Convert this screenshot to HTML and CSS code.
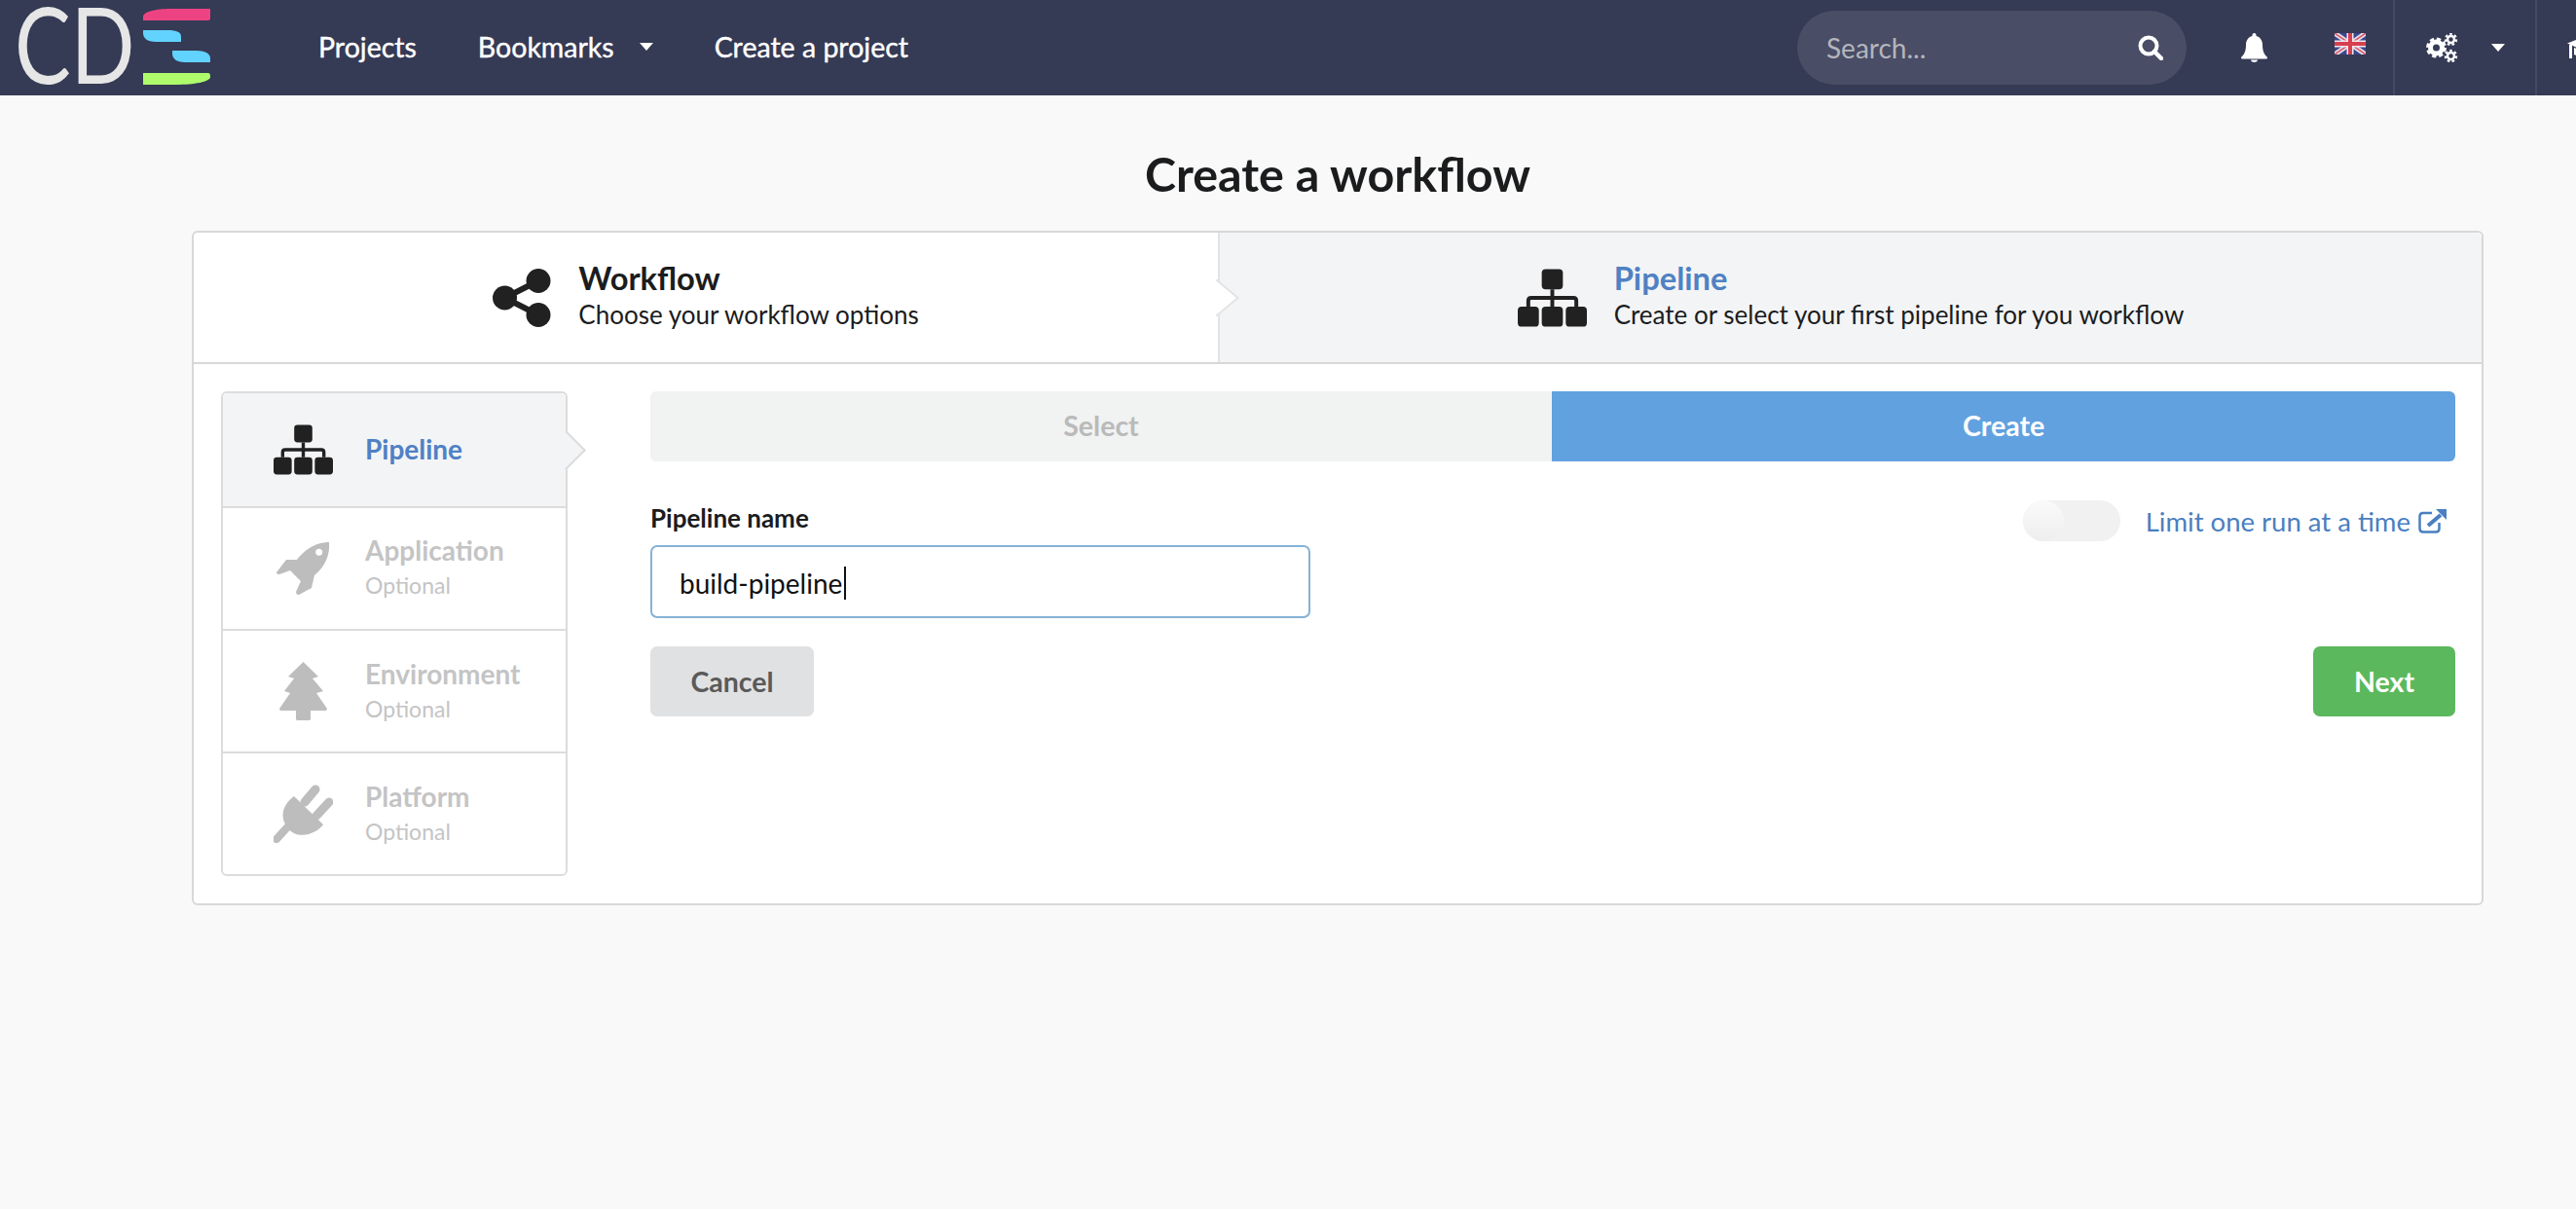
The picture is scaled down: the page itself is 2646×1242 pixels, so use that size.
FILE: index.html
```html
<!DOCTYPE html>
<html lang="en">

<head>
    <meta charset="UTF-8">
    <meta name="viewport" content="width=device-width, initial-scale=1.0">
    <title>Create a workflow</title>
    <link rel="stylesheet" href="styles.css">
</head>

<body>
    <nav class="navbar">
        <div class="nav-left">
            <svg class="logo" width="230" height="98" viewBox="0 0 230 98">
                <text class="logo-text" transform="translate(15 86) scale(.8 1)">CD</text>
                <path fill="#ee4382" d="M216 9H175C160 9 147 12 147 17V21H214Q216 21 216 19Z" />
                <path fill="#62d2fe" d="M147 31H172C182 31 186 33 186 38V43H160C151 43 147 39 147 34Z" />
                <path fill="#62d2fe" d="M177 52H202C212 52 216 56 216 60V64H190C181 64 177 60 177 55Z" />
                <path fill="#aefc6c" d="M147 75H214Q216 75 216 79C216 84 200 87 180 87H147Z" />
            </svg>
            <a class="nav-link" href="#">Projects</a>
            <a class="nav-link" href="#">Bookmarks<span class="caret caret-link"></span></a>
            <a class="nav-link" href="#">Create a project</a>
        </div>

        <div class="search">
            <span class="search-text">Search...</span>
            <svg width="26" height="26" viewBox="0 0 26 26">
                <circle cx="11" cy="11" r="8.5" fill="none" stroke="#fff" stroke-width="4" />
                <path d="M17 17l7 7" stroke="#fff" stroke-width="4.5" stroke-linecap="round" />
            </svg>
        </div>

        <svg class="bell" width="27" height="30" viewBox="0 0 27 30">
            <path fill="#fff" d="M13.5 0c-1.2 0-2 .8-2 2v1C7 4 5 8 5 12c0 7-2 10-5 13 0 1 .5 1.500 1.500 1.500h24c1 0 1.500-.5 1.500-1.500-3-3-5-6-5-13 0-4-2-8-6.500-9V2c0-1.200-.8-2-2-2z" />
            <path fill="#fff" d="M10 27.500h7c0 1.500-1.500 2.500-3.500 2.500S10 29 10 27.500z" />
        </svg>

        <svg class="flag" width="32" height="22" viewBox="0 0 32 22">
            <rect width="32" height="22" fill="#39478f" />
            <path d="M0 0l32 22M32 0L0 22" stroke="#e8e0e6" stroke-width="5" />
            <path d="M0 0l32 22M32 0L0 22" stroke="#d9576a" stroke-width="1.500" />
            <path d="M16 0v22M0 11h32" stroke="#f1e9ee" stroke-width="7" />
            <path d="M16 0v22M0 11h32" stroke="#d8404f" stroke-width="4" />
        </svg>

        <div class="nav-cell nav-cell-gears">
            <svg width="33" height="30" viewBox="0 0 33 30">
                <g fill="none" stroke="#fff">
                    <circle cx="10.500" cy="15" r="6" stroke-width="5" />
                    <circle cx="10.500" cy="15" r="8.500" stroke-width="4" stroke-dasharray="4 2.700" />
                    <circle cx="25.500" cy="6.500" r="3.500" stroke-width="2.500" />
                    <circle cx="25.500" cy="6.500" r="5.500" stroke-width="2.500" stroke-dasharray="2.500 2.300" />
                    <circle cx="25.500" cy="23.500" r="3.500" stroke-width="2.500" />
                    <circle cx="25.500" cy="23.500" r="5.500" stroke-width="2.500" stroke-dasharray="2.500 2.300" />
                </g>
            </svg>
            <span class="caret caret-gears"></span>
        </div>

        <div class="nav-cell nav-cell-last">
            <svg width="34" height="22" viewBox="0 0 34 22">
                <path fill="#fff" d="M0 6.500L17 0l17 7-17 7z" />
                <path fill="#fff" d="M2 8h3v14H2zM7 11l10 4 10-4v7c-6 3-14 3-20 0z" />
            </svg>
        </div>
    </nav>

    <div class="content">
        <h1 class="page-title">Create a workflow</h1>

        <div class="wizard">
            <div class="steps">
                <div class="step step-active">
                    <svg class="step-icon" width="60" height="60" viewBox="0 0 60 60">
                        <circle cx="47" cy="12.500" r="12.500" fill="#212121" />
                        <circle cx="47" cy="47.500" r="12.500" fill="#212121" />
                        <circle cx="12.500" cy="30" r="12.500" fill="#212121" />
                        <path d="M47 12.500L12.500 30 47 47.500" fill="none" stroke="#212121" stroke-width="6" />
                    </svg>
                    <div class="step-text">
                        <div class="step-title">Workflow</div>
                        <div class="step-desc">Choose your workflow options</div>
                    </div>
                </div>
                <div class="step step-current">
                    <svg class="step-icon" width="71" height="60" viewBox="0 0 72 60">
                        <use href="#sitemap" />
                    </svg>
                    <div class="step-text">
                        <div class="step-title step-title-blue">Pipeline</div>
                        <div class="step-desc">Create or select your first pipeline for you workflow</div>
                    </div>
                </div>
            </div>

            <div class="wizard-body">
                <div class="sidebar">
                    <div class="side-row side-row-active">
                        <div class="side-icon">
                            <svg width="61" height="54" viewBox="0 0 72 60">
                                <defs>
                                    <g id="sitemap" fill="#212121">
                                        <rect x="25" width="22" height="21" rx="4" />
                                        <rect y="39" width="22" height="21" rx="4" />
                                        <rect x="25" y="39" width="22" height="21" rx="4" />
                                        <rect x="50" y="39" width="22" height="21" rx="4" />
                                        <path d="M11 39v-6q0-3 3-3h44q3 0 3 3v6M36 21v18" fill="none" stroke="#212121" stroke-width="4" />
                                    </g>
                                </defs>
                                <use href="#sitemap" />
                            </svg>
                        </div>
                        <div class="side-text">
                            <div class="side-title side-title-blue">Pipeline</div>
                        </div>
                    </div>
                    <div class="side-row side-row-app">
                        <div class="side-icon">
                            <svg width="55" height="54" viewBox="0 0 55 54">
                                <path fill="#bdbdbd" fill-rule="evenodd" d="M54 0C45 0 33 3 21 18H10L0 31Q0 33 3 33L14 29 25 40 20 51Q20 54 23 54L36 47 39 34C51 24 55 12 54 0ZM43.700 6.800a3.500 3.500 0 1 1 0 7 3.500 3.500 0 0 1 0-7Z" />
                            </svg>
                        </div>
                        <div class="side-text">
                            <div class="side-title">Application</div>
                            <div class="side-sub">Optional</div>
                        </div>
                    </div>
                    <div class="side-row">
                        <div class="side-icon">
                            <svg width="49" height="60" viewBox="0 0 49 60">
                                <path fill="#bdbdbd" d="M24.500 0L40 15l-6 2 11 13-7 2 11 16-1 2H32v9l-1 1H18l-1-1v-9H1l-1-2 11-16-6-2 10-13-6-2z" />
                            </svg>
                        </div>
                        <div class="side-text">
                            <div class="side-title">Environment</div>
                            <div class="side-sub">Optional</div>
                        </div>
                    </div>
                    <div class="side-row side-row-last">
                        <div class="side-icon">
                            <svg width="61" height="60" viewBox="0 0 61 60">
                                <path fill="#bdbdbd" d="M21 12L51 41C45 50 25 58 15 45 5 33 10 20 21 12Z" />
                                <path d="M32 18L43 5M44 32L57 18" stroke="#bdbdbd" stroke-width="9" stroke-linecap="round" />
                                <path d="M14 44L3 56" stroke="#bdbdbd" stroke-width="8" stroke-linecap="round" />
                            </svg>
                        </div>
                        <div class="side-text">
                            <div class="side-title">Platform</div>
                            <div class="side-sub">Optional</div>
                        </div>
                    </div>
                </div>

                <div class="main">
                    <div class="tabs">
                        <div class="tab tab-select">Select</div>
                        <div class="tab tab-create">Create</div>
                    </div>

                    <div class="form-row">
                        <div>
                            <div class="field-label">Pipeline name</div>
                            <div class="field-input">build-pipeline<span class="field-caret"></span></div>
                        </div>
                        <div class="limit">
                            <div class="toggle"><div class="toggle-knob"></div></div>
                            <a class="limit-link" href="#">Limit one run at a time</a>
                            <svg width="29" height="25" viewBox="0 0 29 25">
                                <path d="M14 4H5Q1.500 4 1.500 7.500V20Q1.500 23.500 5 23.500H18Q21.500 23.500 21.500 20V14" fill="none" stroke="#4a7fc1" stroke-width="2.500" />
                                <path d="M10 17L23 6" stroke="#4a7fc1" stroke-width="4" />
                                <path fill="#4a7fc1" d="M18 0H29V11Z" />
                            </svg>
                        </div>
                    </div>

                    <div class="buttons">
                        <button class="btn btn-cancel">Cancel</button>
                        <button class="btn btn-next">Next</button>
                    </div>
                </div>
            </div>
        </div>
    </div>
</body>

</html>
```

FILE: styles.css
```css
* {
    margin: 0;
    padding: 0;
    box-sizing: border-box;
}

body {
    background: #f9f9f9;
    font-family: Lato, "Liberation Sans", sans-serif;
    color: #1b1c1d;
    overflow: hidden;
}

a {
    text-decoration: none;
}

/* top bar */
.navbar {
    display: flex;
    align-items: center;
    height: 98px;
    background: #353a55;
    overflow: hidden;
}

.nav-left {
    flex: 0 0 1846px;
    display: flex;
    align-items: center;
    gap: 63px;
}

.logo {
    flex: none;
    margin-right: 34px;
}

.logo-text {
    font-size: 108px;
    fill: #e6e6e6;
}

.nav-link {
    font-size: 28.5px;
    color: #fff;
    -webkit-text-stroke: 0.4px #fff;
    display: flex;
    align-items: center;
    padding-bottom: 2px;
}

.caret {
    width: 0;
    height: 0;
    border-left: 7px solid transparent;
    border-right: 7px solid transparent;
    border-top: 8px solid #fff;
}

.caret-link {
    margin-left: 26px;
}

.caret-gears {
    margin-left: 34px;
}

.search {
    flex: none;
    width: 400px;
    height: 76px;
    border-radius: 38px;
    background: #494d66;
    display: flex;
    align-items: center;
    justify-content: space-between;
    padding: 0 24px 0 30px;
}

.search-text {
    font-size: 28px;
    color: #b4b5bd;
}

.bell {
    flex: none;
    margin-left: 56px;
}

.flag {
    flex: none;
    margin: 0 28px 8px 69px;
}

.nav-cell {
    flex: none;
    height: 98px;
    display: flex;
    align-items: center;
    border-left: 2px solid #454962;
}

.nav-cell-gears {
    width: 146px;
    padding-left: 32px;
}

.nav-cell-last {
    padding-left: 31px;
}

/* page content sits off-centre, same as the original */
.content {
    width: 2354px;
    margin-left: 197px;
}

.page-title {
    font-size: 48.4px;
    line-height: 60px;
    font-weight: 700;
    text-align: center;
    padding: 50px 0 29px;
}

/* wizard */
.wizard {
    border: 2px solid #d8d8d9;
    border-radius: 6px;
    background: #fff;
}

.steps {
    display: flex;
    height: 135px;
    border-bottom: 2px solid #d8d8d9;
}

.step {
    display: flex;
    align-items: center;
    justify-content: center;
    gap: 28px;
    position: relative;
}

.step-active {
    width: 1052px;
    border-radius: 6px 0 0 0;
}

.step-active::after {
    content: "";
    position: absolute;
    top: 52px;
    right: -14px;
    width: 28px;
    height: 28px;
    background: #fff;
    border: solid #e3e3e4;
    border-width: 2px 2px 0 0;
    transform: rotate(45deg) skew(-5deg, -5deg);
    z-index: 1;
}

.step-current {
    flex: 1;
    background: #f3f4f5;
    border-left: 2px solid #e3e3e4;
    border-radius: 0 6px 0 0;
}

.step-text {
    padding-bottom: 3px;
}

.step-title {
    font-size: 32.7px;
    line-height: 36px;
    font-weight: 700;
}

.step-title-blue {
    color: #4f81c3;
}

.step-desc {
    font-size: 26px;
    line-height: 34px;
    margin-top: 2px;
}

.wizard-body {
    display: flex;
    gap: 85px;
    padding: 28px 27px 28px 28px;
}

.sidebar {
    flex: none;
    width: 356px;
    height: 498px;
    border: 2px solid #dcdcdd;
    border-radius: 6px;
}

.side-row {
    display: flex;
    align-items: center;
    height: 126px;
    border-bottom: 2px solid #dcdcdd;
}

.side-row-active {
    height: 118px;
    background: #f3f4f5;
    border-radius: 5px 5px 0 0;
    position: relative;
}

.side-row-active::after {
    content: "";
    position: absolute;
    top: 44px;
    right: -15px;
    width: 27px;
    height: 27px;
    background: #f3f4f5;
    border: solid #dcdcdd;
    border-width: 2px 2px 0 0;
    transform: rotate(45deg);
}

.side-row-last {
    height: 124px;
    border-bottom: none;
}

.side-icon {
    flex: none;
    width: 146px;
    padding-left: 18px;
    display: flex;
    justify-content: center;
}

.side-text {
    padding-bottom: 3px;
}

.side-row-app .side-text {
    padding-bottom: 6px;
}

.side-title {
    font-size: 28px;
    line-height: 36px;
    font-weight: 700;
    color: #c4c4c5;
}

.side-title-blue {
    color: #4f81c3;
}

.side-sub {
    font-size: 23px;
    line-height: 30px;
    margin-top: 3px;
    color: #c4c4c5;
}

.main {
    flex: 1;
}

.tabs {
    display: flex;
    height: 72px;
}

.tab {
    display: flex;
    align-items: center;
    justify-content: center;
    font-size: 28.5px;
    font-weight: 700;
    padding-bottom: 2px;
}

.tab-select {
    flex: 0 0 926px;
    background: #f1f2f2;
    color: #bababa;
    border-radius: 6px 0 0 6px;
}

.tab-create {
    flex: 1;
    background: #62a1df;
    color: #fff;
    border-radius: 0 6px 6px 0;
}

.form-row {
    display: flex;
    justify-content: space-between;
    align-items: flex-start;
}

.field-label {
    font-size: 26px;
    line-height: 32px;
    font-weight: 700;
    margin: 42px 0 12px;
}

.field-input {
    width: 678px;
    height: 75px;
    border: 2px solid #85b2d6;
    border-radius: 7px;
    padding: 2px 0 0 28px;
    display: flex;
    align-items: center;
    font-size: 28px;
    color: #111;
}

.field-caret {
    width: 2px;
    height: 34px;
    margin-left: 2px;
    background: #111;
}

.limit {
    display: flex;
    align-items: center;
    margin-top: 40px;
    padding-right: 9px;
}

.toggle {
    width: 100px;
    height: 42px;
    border-radius: 21px;
    background: #f1f1f1;
    margin-right: 26px;
}

.toggle-knob {
    width: 42px;
    height: 42px;
    border-radius: 21px;
    background: linear-gradient(#fafafa, #eeeeee);
}

.limit-link {
    font-size: 27.5px;
    color: #4a7fc1;
    margin-right: 8px;
}

.buttons {
    display: flex;
    justify-content: space-between;
    margin-top: 29px;
}

.btn {
    height: 72px;
    border: none;
    border-radius: 7px;
    font-family: inherit;
    font-size: 28.5px;
    font-weight: 700;
}

.btn-cancel {
    width: 168px;
    background: #e0e1e2;
    color: #5a5a5a;
}

.btn-next {
    width: 146px;
    background: #5cb85c;
    color: #fff;
}
```
